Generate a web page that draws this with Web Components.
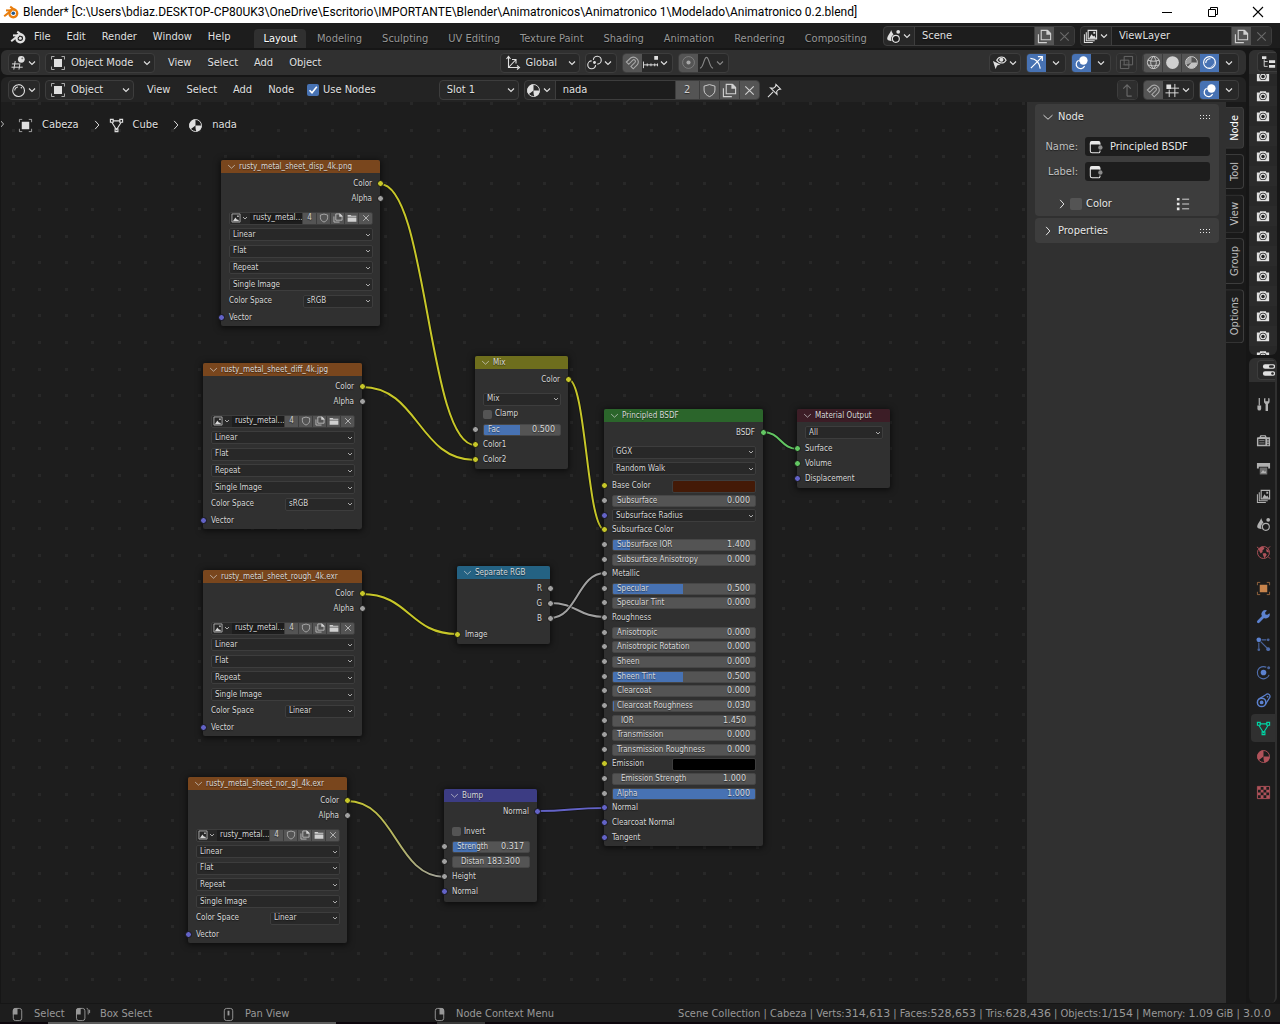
<!DOCTYPE html>
<html lang="en">
<head>
<meta charset="utf-8">
<title>Blender</title>
<style>
html, body { margin: 0; height: 100%; background: #161616; }
body { font: 11px/14px "DejaVu Sans Condensed", "DejaVu Sans", sans-serif; color: #e0e0e0; overflow: hidden; }
</style>
</head>
<body>
<blender-app></blender-app>
<script>
const S = (d, w = 1, extra = '') => `<path d="${d}" fill="none" stroke="currentColor" stroke-width="${w}" ${extra}/>`;
const F = (d, extra = '') => `<path d="${d}" fill="currentColor" ${extra}/>`;
const C = (x, y, r, extra = '') => `<circle cx="${x}" cy="${y}" r="${r}" fill="currentColor" ${extra}/>`;
const O = (x, y, r, w = 1, extra = '') => `<circle cx="${x}" cy="${y}" r="${r}" fill="none" stroke="currentColor" stroke-width="${w}" ${extra}/>`;
const MAGNET = S('M1.500 7.500L6 3.200A5.200 5.200 0 0 1 13.200 10.400L8.800 14.700L6.300 12.200L10.700 7.900A1.700 1.700 0 0 0 8.300 5.500L4 9.900z', 1.200);
const LOGO = S('M1.2 12.2L8.2 6.6', 2) + S('M3 6.4h6', 2) + S('M7.2 2.6l5 3.8', 2) + O(10.3, 9.3, 3.9, 2.4);
const ICONS = {
  logo: LOGO + C(10.3, 9.3, 1.5),
  logocolor: `<g color="#e87d0d">${LOGO}</g><circle cx="10.3" cy="9.3" r="1.8" fill="#265787"/>`,
  view3d: S('M1 9.5h8M.5 13h12M4.5 6.5l-1.5 9M9.5 9l-1 6.5') + C(11, 4.6, 3.6) + `<circle cx="12" cy="3.6" r="1" fill="#777"/>`,
  object: F('M4 4h8v8H4z') + S('M1.5 4.5v-3h3M11.5 1.5h3v3M14.5 11.5v3h-3M4.5 14.5h-3v-3', 1, 'opacity=".7"'),
  axes: S('M3.5 2v10.500h10M1.500 4l2-2.500 2 2.500M12 10.500l2.500 2-2.500 2M4 12l6.500-7M7 4.500h4v4', 1.1),
  pivot: C(8, 8, 1.5) + S('M6.800 5.200A4.200 4.200 0 1 1 11 9.700M9.200 10.800A4.200 4.200 0 1 1 5 6.300', 1.200),
  magnet: MAGNET,
  snapinc: S('M.5 7v7M4.500 9v3M8.500 9v3M12.500 9v3M15.500 9v3M.5 10.500h15', 1) + F('M12 1h4v4h-4z'),
  prop: O(8, 8, 6.300, 1, 'opacity=".5"') + C(8, 8, 2.200),
  falloff: S('M1 14c4 0 4-11.500 7-11.500S11 14 15 14', 1.200),
  visibility: S('M5 5.500c2.500-4.500 8-4.500 10 0-2 4-7.500 4-10 0z', 1.200) + C(10, 5, 2.200) + F('M1 6.500l8 3.500-3.500 1.300L3.800 15z'),
  gizmo: S('M2 14L14 2M9.500 1.800H14.200V6.500', 1.300) + S('M1.500 3.500c6 .5 9.500 4 10.500 11', 1.300),
  overlay: C(10, 5.800, 4.500) + S('M5 5.600a4.700 4.700 0 1 0 6.300 6.200', 1.300) + `<path d="M6 7.500a3.200 3.200 0 0 0 3.300 4.200" fill="none" stroke="#4772b3" stroke-width="1"/>`,
  xray: S('M5.500 1.500h9v9h-9z') + S('M1.500 5.500h9v9h-9z') + S('M4 10.500h3M8.500 8v3', 1, 'stroke-dasharray="1 1"'),
  wire: O(8, 8, 6.500) + S('M8 1.500c-4 4-4 9 0 13 4-4 4-9 0-13M2 5.500c4 1.500 8 1.500 12 0M2 10.500c4 1.500 8 1.500 12 0'),
  solid: C(8, 8, 6.800),
  matprev: O(8, 8, 6.300) + F('M8 8V2a6 6 0 0 0-5.500 8.500z', 'opacity=".6"') + F('M8 8h6a6 6 0 0 1-6 6 7 7 0 0 1-4-1.500z', 'opacity=".9"'),
  rendered: O(8, 8, 6.300, 1.200) + S('M4 8.500A4.500 4.500 0 0 1 9 4', 1.200) + F('M13.500 5A7 7 0 0 1 5 13.500 8 8 0 0 0 13.500 5z', 'opacity=".7"'),
  matsphere: S('M1.800 8.500A6.300 6.300 0 1 0 8 1.800 6.300 6.300 0 0 0 1.800 8.500z', 1.200) + S('M4 8A4 4 0 0 1 7.500 4.200', 1.100) + C(11, 5, .8),
  material: O(8, 8, 6.400) + F('M8 8V1.500A6.500 6.500 0 0 0 2.800 12z') + F('M8 8h6.500A6.500 6.500 0 0 1 9 14.500C8 12.500 8 10 8 8z'),
  shield: S('M8 1.700l5.800 1.600v4.200c0 3.300-2.500 5.700-5.800 7-3.300-1.300-5.800-3.700-5.800-7V3.300z'),
  copy: S('M4.500 1.500h6.500l3.500 3.500v6.500h-10z', 1.200) + F('M10 1h1.500l3.500 3.500V6h-5z') + S('M1.500 5.500v9h9', 1.200),
  folder: F('M1 3h5l1 1.500h8V6H1z') + F('M1 7h14v7H1z'),
  x: S('M3.500 3.500l9 9M12.500 3.500l-9 9', 1.200),
  image: S('M1.500 1.500h13v13h-13z', 1.100) + F('M3 13l4-6 3 4 1-1 2 3z') + F('M10 4h2.200v2.200H10z'),
  chevron: S('M4 6l4 4 4-4', 1.500),
  right: S('M5.500 2.500l5 5.500-5 5.500', 1.300),
  down: S('M2 5.500l6 5.500 6-5.500', 1.200),
  mesh: S('M3 4.500L8 12.500 13 4.500M4 3h8', 1.200) + S('M1.500 1.500h3v3h-3zM11.500 1.500h3v3h-3zM6.500 11.500h3v3h-3z', 1.200),
  pin: S('M9.500 1.500l5 5-2.200.3-2 2.200.4 3.200-7-7 3.200.4 2.300-2zM6.500 9.500L1 15', 1.100),
  up: S('M7.500 14V2M3.500 6l4-4 4 4M7.500 14h5', 1.200),
  gridsnap: S('M.5 10.500h14M6 5.500h9M4.500 7v8M10.500 1v14') + F('M1.500 1.500h5v5h-5z'),
  camera: F('M1 4h3.500V2.500h7V4H15v10H1z') + `<circle cx="8" cy="8.500" r="4.200" fill="#282828"/>` + C(8, 8.500, 3.300) + `<circle cx="8" cy="8.500" r="2" fill="#282828"/>`,
  outliner: F('M0 1.500h5v3H0z') + F('M8 6h7v3H8z') + F('M8 11.500h7v3H8z') + S('M2.500 5v8h4M2.500 7.500h4'),
  props: F('M3.500 1.500h9a2.500 2.500 0 0 1 0 5h-9a2.500 2.500 0 0 1 0-5zM3.500 9.500h9a2.500 2.500 0 0 1 0 5h-9a2.500 2.500 0 0 1 0-5z') + `<rect x="8" y="2.500" width="5.500" height="3" rx="1.500" fill="#282828"/><rect x="10.500" y="10.500" width="3" height="3" rx="1.500" fill="#282828"/>`,
  tool: S('M3.500 1v8', 1.300) + F('M1.500 9h4v3.500a2 2 0 0 1-4 0z') + S('M11.500 6v9', 2.600) + F('M8.500 1.500v3a3 3 0 0 0 6 0v-3l-1.500-.5v3.500h-3V1z'),
  render: F('M1 5.500a1 1 0 0 1 1-1h1.500L5 2h5l1.500 2.500H15V14H1z') + `<path d="M2.500 6.500h7.500v6H2.500zM12 6.500h1.500V8H12zM12 9h1.500v1.500H12zM12 11.500h1.500V13H12zM5.500 3h4v1h-4z" fill="#2a2a2a"/><path d="M3.500 8h5.500M3.500 10.500h5.500" stroke="#777"/>`,
  output: F('M1 2h14v6h-2V6H3v2H1z') + F('M4 7h8v7.500H4z', 'opacity=".55"') + F('M5 13l2.500-3.500L9 11.500l1-1 1 2.500z'),
  viewlayer: S('M5.500 1.500h9v9h-9z', 1.200) + F('M6.500 10l2.500-4.500L11 8l1-1 2 3z') + F('M11 3h2v2h-2z') + S('M3.500 3.500v9h9M1.500 5.500v9h9', 1.100),
  scene: F('M5.500 1c1 3.500 4.500 6.500 3.200 10.500-1 1.500-5.500 1.700-7 0C0 8.500 4.500 5 5.500 1z') + `<circle cx="10.500" cy="10.500" r="5" fill="#1d1d1d"/>` + O(10.500, 10.500, 3.700, 1.200) + C(13, 3, 2),
  world: O(8, 8, 6.400) + F('M3 4c2-2.500 5-2 5-2l1 2-2 1.500v2L5 9 3.500 6.500zM7 9l3-.5 1.500 2-2.500 3.500-1-2zM10.500 4.500L13 5l1 3-2.500-.5z') + S('M1 2l3 2.500M12.500 4L15 1.500M13 12.500l2 2'),
  wrench: S('M2.500 13.500L8.500 7.500', 3, 'stroke-linecap="round"') + F('M14.500 4.500a4.200 4.200 0 0 1-7 4.200A4.200 4.200 0 0 1 11.700 1.500L9.700 3.800l.4 2 2 .4z'),
  particles: C(3, 3, 2.500) + C(13, 3, 1.500, 'opacity=".7"') + C(3, 13.500, 1.400, 'opacity=".7"') + C(13, 13, 2, 'opacity=".8"') + S('M6 3h5M3 6v6M5 5l7 7', 1.200, 'opacity=".7"'),
  physics: C(8, 8, 3) + S('M11 2.500A6.500 6.500 0 1 0 14 10.500', 1.200, 'opacity=".8"') + C(13.500, 3, 1.600, 'opacity=".7"'),
  constraint: O(6, 10, 4.500, 1.600) + C(6, 10, 2) + S('M3 6.500L10.500 1.800a2.600 2.600 0 0 1 3.700 3.700L10 12.300', 1.300) + C(12.300, 4, .9),
  texture: S('M1.500 1.500h13v13h-13z') + F('M2 2h3v3H2zM8 2h3v3H8zM5 5h3v3H5zM11 5h3v3h-3zM2 8h3v3H2zM8 8h3v3H8zM5 11h3v3H5zM11 11h3v3h-3z'),
  mouse: S('M3.500 4a2.500 2.500 0 0 1 2.500-2.500h4a2.500 2.500 0 0 1 2.500 2.500v8a2.500 2.500 0 0 1-2.500 2.500h-4a2.500 2.500 0 0 1-2.500-2.500z', 1),
  node: S('M1.500 4v8.500a2 2 0 0 0 2 2h7M12.500 4v1', 1.200) + F('M1 5V3a2 2 0 0 1 2-2h8a2 2 0 0 1 2 2v2z') + S('M12.500 12v1a1.500 1.500 0 0 1-2 1.500', 1.200) + C(13, 8.500, 2.500, 'opacity=".55"'),
  list: F('M1 1h3v3H1zM1 6.500h3v3H1zM1 12h3v3H1z') + S('M7 2.500h8M7 8h8M7 13.500h8'),
  grip: F('M0 6h1v1H0zM3 6h1v1H3zM6 6h1v1H6zM9 6h1v1H9zM0 9h1v1H0zM3 9h1v1H3zM6 9h1v1H6zM9 9h1v1H9z', 'shape-rendering="crispEdges"'),
  minimize: S('M3 8.500h10'),
  restore: S('M3.500 5.500h7v7h-7zM5.500 5.500v-2h7v7h-2'),
  close: S('M3 3l10 10M13 3L3 13', 1.100)
};
ICONS.mouseL = ICONS.mouse + F('M3 8V4a3 3 0 0 1 3-3h2v7z');
ICONS.mouseR = ICONS.mouse + F('M13 8V4a3 3 0 0 0-3-3H8v7z');
ICONS.mouseM = ICONS.mouse + F('M7 4h2v5H7z');
ICONS.mouseDrag = `<g transform="translate(-3 0)">${ICONS.mouseL}</g>` + S('M11.500 1l1.500 2v5M14.500 3v3.500');

const SHARED = `
:host { display: block; box-sizing: border-box; }
:host([hidden]) { display: none; }
*, *::before { box-sizing: border-box; }
button, input, select { font: inherit; color: inherit; margin: 0; padding: 0; border: 0; border-radius: 0; background: none; min-width: 0; appearance: none; outline: none; text-shadow: inherit; }
button { cursor: default; }
`;
function define(name, css, render, after) {
  customElements.define(name, class extends HTMLElement {
    constructor() { super(); this.attachShadow({ mode: 'open' }); }
    connectedCallback() {
      const t = document.createElement('template');
      t.innerHTML = `<style>${SHARED}${css}</style>${render(k => this.getAttribute(k) ?? '', this)}`;
      this.shadowRoot.replaceChildren(t.content.cloneNode(true));
      if (after) after(this);
    }
  });
}

define('bl-icon', `
:host { display: block; flex: none; width: var(--icon, 16px); height: var(--icon, 16px); }
svg { display: block; width: 100%; height: 100%; overflow: visible; }`,
  a => `<svg viewBox="0 0 16 16" aria-hidden="true">${ICONS[a('name')] || ''}</svg>`);

/* Joined row of widgets with one rounded outline */
define('bl-group', `
:host { display: flex; flex: none; height: 20px; border: 1px solid #3d3d3d; border-radius: 4px; background: #282828; overflow: hidden; }
:host([compact]) { height: 13px; border-radius: 2px; --icon: 10px; }`,
  () => `<slot></slot>`);

define('bl-button', `
:host { display: flex; flex: none; width: 19px; }
button { display: flex; flex: 1; align-items: center; justify-content: center; --icon: 15px; }
:host([small]) button { --icon: 10px; }
:host([menu]) { width: 30px; }
:host([chev]) bl-icon { --icon: 12px; }
:host([menu]) bl-icon + bl-icon { --icon: 12px; }
:host([menu][small]) bl-icon + bl-icon { --icon: 8px; }
:host([tone=on]) button { background: #4772b3; color: #fff; }
:host([tone=raised]) button { background: #545454; border-left: 1px solid #3d3d3d; color: #d0d0d0; }
:host([tone=soft]) button { background: #545454; color: #a8a8a8; }
:host([tone=dim]) button { color: #6a6a6a; background: #2e2e2e; }
:host([tone=faint]) button { color: #888; }
button:hover { filter: brightness(1.15); }`,
  a => `<button type="button" aria-label="${a('label')}">${a('text') || `<bl-icon name="${a('icon')}"></bl-icon>`}${a('kind') === 'menu' ? '<bl-icon name="chevron"></bl-icon>' : ''}</button>`,
  el => { if (el.getAttribute('kind') === 'menu') el.toggleAttribute('menu', true); if (el.getAttribute('icon') === 'chevron') el.toggleAttribute('chev', true); });

define('bl-select', `
:host { display: flex; height: 20px; flex: none; border: 1px solid #3d3d3d; border-radius: 4px; background: #282828; width: var(--w); }
label { flex: 1; display: grid; align-items: center; min-width: 0; }
label > * { grid-area: 1 / 1; }
select { width: 100%; height: 100%; padding-left: 7px; }
:host([icon]) select { padding-left: 25px; }
.lead { margin-left: 4px; }
.chev { justify-self: end; --icon: 12px; margin-right: 1px; pointer-events: none; }
option { background: #181818; }
:host([compact]) { height: 13px; border-radius: 2px; flex: 1; }
:host([compact]) select { padding-left: 3px; }
:host([compact]) .chev { --icon: 8px; margin-right: 0; }`,
  a => `<label>${a('icon') ? `<bl-icon class="lead" name="${a('icon')}"></bl-icon>` : ''}<select aria-label="${a('label')}">${a('options').split('|').map(o => `<option>${o}</option>`).join('')}</select><bl-icon class="chev" name="chevron"></bl-icon></label>`);

define('bl-menu', `:host { flex: none; } button { padding: 0 8px; height: 20px; } button:hover { background: #3d3d3d; border-radius: 4px; }`,
  a => `<button type="button">${a('label')}</button>`);

define('bl-check', `
:host { flex: none; }
label { display: flex; align-items: center; gap: var(--gap, 4px); }
span { display: grid; width: var(--box, 12px); height: var(--box, 12px); }
span > * { grid-area: 1 / 1; }
input { width: 100%; height: 100%; border-radius: 2px; background: #545454; }
input:checked { background: #4772b3; }
input + svg { display: none; }
input:checked + svg { display: block; pointer-events: none; }`,
  a => `<label><span><input type="checkbox" ${a('state') === 'on' ? 'checked' : ''}><svg viewBox="0 0 12 12"><path d="M2.500 6.200L5 8.800 9.800 2.800" fill="none" stroke="#fff" stroke-width="1.600"/></svg></span>${a('label')}</label>`);

/* Label and value inside one box, with a blue part that shows the value */
define('bl-number', `
:host { flex: 1; min-width: 0; }
label { display: flex; align-items: center; height: 12px; border: 1px solid #464646; border-radius: 2px; padding: 0 5px 0 4px; white-space: nowrap;
  background: linear-gradient(90deg, #4772b3 var(--fill), #545454 var(--fill)); }
:host([plain]) label { padding: 0 9px 0 8px; }
span { flex: none; }
input { flex: 1; width: 20px; height: 10px; text-align: right; font-family: "DejaVu Sans", sans-serif; }`,
  a => `<label style="--fill:${a('fill') || 0}%"><span>${a('label')}</span><input value="${a('value')}"></label>`);

define('bl-socket', `
:host { position: absolute; top: 50%; width: 7px; height: 7px; margin-top: -4px; border-radius: 50%; border: 1px solid #141414; box-sizing: border-box; background: var(--c); }
:host([side=in]) { left: -3px; }
:host([side=out]) { right: -4px; }`, () => '');

const TINT = { y: '#c7c729', g: '#a1a1a1', v: '#6363c7', s: '#63c763' };
const sock = (c, side) => c ? `<bl-socket side="${side}" style="--c:${TINT[c]}"></bl-socket>` : '';
const out = (t, c) => `<div class="row end">${t}${sock(c, 'out')}</div>`;
const inp = (t, c) => `<div class="row">${t}${sock(c, 'in')}</div>`;
const sel = (t, c) => `<div class="row"><bl-select compact label="${t}" options="${t}"></bl-select>${sock(c, 'in')}</div>`;
const num = (t, v, fill = 0, plain = '') => `<div class="row"><bl-number label="${t}" value="${v}" fill="${fill}" ${plain}></bl-number>${sock('g', 'in')}</div>`;
const swatch = (t, color) => `<div class="row"><label for="${t.replace(' ', '')}">${t}</label><input id="${t.replace(' ', '')}" type="color" value="${color}">${sock('y', 'in')}</div>`;
const group = (mt, h, ...rows) => `<div class="rows" style="margin-top:${mt}px;height:${h}px">${rows.join('')}</div>`;
const imageBody = space =>
  group(4, 29, out('Color', 'y'), out('Alpha', 'g')) +
  group(4, 116,
    `<div class="row"><bl-group compact class="data">
      <bl-button small kind="menu" icon="image" label="Browse image"></bl-button>
      <input class="name" aria-label="Image name" value="rusty_metal...">
      <bl-button small tone="raised" text="4" label="Users"></bl-button>
      <bl-button small tone="raised" icon="shield" label="Fake user"></bl-button>
      <bl-button small tone="raised" icon="copy" label="New image"></bl-button>
      <bl-button small tone="raised" icon="folder" label="Open image"></bl-button>
      <bl-button small tone="raised" icon="x" label="Unlink"></bl-button></bl-group></div>`,
    sel('Linear'), sel('Flat'), sel('Repeat'), sel('Single Image'),
    `<div class="row"><span>Color Space</span><bl-select compact class="space" label="Color Space" options="${space}"></bl-select></div>`,
    inp('Vector', 'v'));

const NODES = [
  { x: 220, y: 58, w: 159, c: '#79461d', t: 'rusty_metal_sheet_disp_4k.png', b: imageBody('sRGB') },
  { x: 202, y: 261, w: 159, c: '#79461d', t: 'rusty_metal_sheet_diff_4k.jpg', b: imageBody('sRGB') },
  { x: 202, y: 468, w: 159, c: '#79461d', t: 'rusty_metal_sheet_rough_4k.exr', b: imageBody('Linear') },
  { x: 187, y: 675, w: 159, c: '#79461d', t: 'rusty_metal_sheet_nor_gl_4k.exr', b: imageBody('Linear') },
  { x: 474, y: 254, w: 93, c: '#6e6e1d', t: 'Mix', b:
    group(3, 15, out('Color', 'y')) + group(4, 16, sel('Mix')) +
    group(0, 14, `<div class="row"><bl-check label="Clamp"></bl-check></div>`) +
    group(2, 44, num('Fac', '0.500', 48), inp('Color1', 'y'), inp('Color2', 'y')) + group(0, 2) },
  { x: 456, y: 464, w: 93, c: '#246283', t: 'Separate RGB', b:
    group(3, 44, out('R', 'g'), out('G', 'g'), out('B', 'g')) + group(1, 15, inp('Image', 'y')) + group(0, 2) },
  { x: 443, y: 687, w: 93, c: '#3c3c83', t: 'Bump', b:
    group(2, 15, out('Normal', 'v')) + group(4, 17, `<div class="row"><bl-check label="Invert"></bl-check></div>`) +
    group(0, 59, num('Strength', '0.317', 32), num('Distan', '183.300', 0, 'plain'), inp('Height', 'g'), inp('Normal', 'v')) + group(0, 3) },
  { x: 603, y: 307, w: 159, c: '#2b652b', t: 'Principled BSDF', b:
    group(3, 15, out('BSDF', 's')) + group(4, 33, sel('GGX'), sel('Random Walk')) +
    group(2, 366,
      swatch('Base Color', '#441a07'), num('Subsurface', '0.000'), sel('Subsurface Radius', 'v'), inp('Subsurface Color', 'y'),
      num('Subsurface IOR', '1.400', 12), num('Subsurface Anisotropy', '0.000'), inp('Metallic', 'g'), num('Specular', '0.500', 49),
      num('Specular Tint', '0.000'), inp('Roughness', 'g'), num('Anisotropic', '0.000'), num('Anisotropic Rotation', '0.000'),
      num('Sheen', '0.000'), num('Sheen Tint', '0.500', 49), num('Clearcoat', '0.000'), num('Clearcoat Roughness', '0.030', 1),
      num('IOR', '1.450', 0, 'plain'), num('Transmission', '0.000'), num('Transmission Roughness', '0.000'), swatch('Emission', '#000000'),
      num('Emission Strength', '1.000', 0, 'plain'), num('Alpha', '1.000', 100), inp('Normal', 'v'), inp('Clearcoat Normal', 'v'), inp('Tangent', 'v')) + group(0, 1) },
  { x: 796, y: 307, w: 93, c: '#3c1d26', t: 'Material Output', b:
    group(2, 17, sel('All')) + group(1, 44, inp('Surface', 's'), inp('Volume', 's'), inp('Displacement', 'v')) + group(0, 2) }
];

define('bl-node', `
:host { font-size: 8px; line-height: 10px; color: #d8d8d8; background: #303030; border-radius: 2px; box-shadow: 0 1px 6px 1px rgba(0,0,0,.6); text-shadow: 0 1px 1px rgba(0,0,0,.5); }
header { display: flex; align-items: center; gap: 3px; height: 13px; padding-left: 6px; border-radius: 2px 2px 0 0; background: var(--head); --icon: 9px; white-space: nowrap; }
.rows { display: grid; grid-auto-rows: 1fr; }
.row { position: relative; display: flex; align-items: center; padding: 0 7px 0 8px; min-height: 0; white-space: nowrap; }
.end { justify-content: flex-end; padding-right: 8px; }
.row bl-check { --box: 9px; --gap: 3px; }
.data { flex: 1; }
.data bl-button { width: 14px; }
.data bl-button[kind=menu] { width: 20px; }
.name { flex: 1; width: 20px; padding-left: 3px; background: #1d1d1d; }
.space { margin-left: auto; flex: none; width: 70px; }
input[type=color] { margin-left: auto; width: 84px; height: 13px; border: 1px solid #3d3d3d; border-radius: 2px; }
input[type=color]::-webkit-color-swatch-wrapper { padding: 0; }
input[type=color]::-webkit-color-swatch { border: 0; border-radius: 1px; }`,
  a => { const n = NODES[+a('index')]; return `<header style="--head:${n.c}"><bl-icon name="down"></bl-icon>${n.t}</header>${n.b}`; });

const LINKS = [
  [379, 82, 474, 343, 'y'], [361, 285, 474, 358, 'y'], [567, 277, 604, 428, 'y'], [549, 501, 604, 515, 'g'], [549, 516, 604, 471, 'g'],
  [762, 330, 797, 347, 's'], [361, 492, 456, 532, 'y'], [346, 699, 444, 775, 'yg'], [536, 709, 604, 706, 'v']];

define('bl-canvas', `
:host { position: relative; flex: 1; min-width: 0; overflow: hidden; background: #1d1d1d; }
svg { position: absolute; inset: 0; width: 100%; height: 100%; }
bl-node { position: absolute; }
nav { position: absolute; left: 17px; top: 12px; height: 21px; display: flex; align-items: center; gap: 9px; --icon: 15px; text-shadow: 0 1px 1px #000; padding-top: 1px; }
nav a { display: flex; gap: 9px; align-items: center; color: inherit; text-decoration: none; }
nav a + bl-icon { --icon: 12px; margin: 0 -3px 0 3px; }
.toggle { position: absolute; left: -4px; top: 14px; width: 12px; height: 16px; display: flex; align-items: center; --icon: 10px; }`,
  () => {
    let dots = '';
    for (let i = 0; i < 40; i++) for (let j = 0; j < 35; j++) dots += `M${Math.round(10.6 + i * 26.58)} ${Math.round(j * 26.56)}h3v3h-3z`;
    const curves = LINKS.map(([x1, y1, x2, y2, c]) => {
      const m = (x1 + x2) / 2, d = `M${x1} ${y1}C${m} ${y1} ${m} ${y2} ${x2} ${y2}`;
      return `<path d="${d}" fill="none" stroke="#101010" stroke-width="3.600" opacity=".7"/><path d="${d}" fill="none" stroke="${c === 'yg' ? 'url(#fade)' : TINT[c]}" stroke-width="2"/>`;
    }).join('');
    return `<svg><defs><linearGradient id="fade"><stop offset="0" stop-color="#c7c729"/><stop offset="1" stop-color="#a1a1a1"/></linearGradient></defs>
      <path d="${dots}" fill="#282828" shape-rendering="crispEdges"/>${curves}</svg>
      <button class="toggle" type="button" aria-label="Show toolbar"><bl-icon name="right"></bl-icon></button>
      <nav><a href="#"><bl-icon name="object"></bl-icon>Cabeza</a><bl-icon name="right"></bl-icon>
      <a href="#"><bl-icon name="mesh"></bl-icon>Cube</a><bl-icon name="right"></bl-icon>
      <a href="#"><bl-icon name="material"></bl-icon>nada</a></nav>` +
      NODES.map((n, i) => `<bl-node index="${i}" style="left:${n.x}px;top:${n.y}px;width:${n.w}px"></bl-node>`).join('');
  });

define('bl-titlebar', `
:host { display: flex; align-items: center; flex: none; height: 23px; background: #fff; color: #000; font: 12px/16px Roboto, "Open Sans", sans-serif; padding-left: 3px; gap: 4px; }
h1 { flex: 1; font: inherit; margin: 0; white-space: nowrap; overflow: hidden; }
div { display: flex; }
button { width: 46px; height: 20px; display: flex; justify-content: center; align-items: center; }
button:last-child { width: 44px; }`,
  () => `<bl-icon name="logocolor"></bl-icon><h1>Blender* [C:\\Users\\bdiaz.DESKTOP-CP80UK3\\OneDrive\\Escritorio\\IMPORTANTE\\Blender\\Animatronicos\\Animatronico 1\\Modelado\\Animatronico 0.2.blend]</h1>
  <div><button aria-label="Minimize"><bl-icon name="minimize"></bl-icon></button><button aria-label="Restore"><bl-icon name="restore"></bl-icon></button><button aria-label="Close"><bl-icon name="close"></bl-icon></button></div>`);

define('bl-datablock', `
input { width: 120px; background: #1d1d1d; padding-left: 7px; border-left: 1px solid #3d3d3d; }
bl-group { display: flex; }
bl-button:not([kind]) { width: 20px; }`,
  a => `<bl-group><bl-button kind="menu" icon="${a('icon')}" label="Browse"></bl-button><input aria-label="${a('label')}" value="${a('label')}">${a('users') ? '<bl-button tone="raised" text="2" label="Users" style="width:24px"></bl-button><bl-button tone="raised" icon="shield" label="Fake user"></bl-button>' : ''}<bl-button tone="raised" icon="copy" label="New"></bl-button><bl-button tone="${a('users') ? 'raised' : 'dim'}" icon="x" label="Remove"></bl-button></bl-group>`);

define('bl-topbar', `
:host { display: flex; flex: none; height: 25px; background: #1d1d1d; padding: 0 8px 0 10px; text-shadow: 0 1px 1px rgba(0,0,0,.6); }
.menus { display: flex; align-items: center; padding-top: 2px; }
.tabs { display: flex; align-items: flex-end; margin-left: 16px; flex: 1; overflow: hidden; }
.tabs button { height: 19px; padding: 1px 9px 0; margin-right: 2px; color: #989898; white-space: nowrap; }
.tabs .on { background: #303030; color: #fff; border-radius: 4px 4px 0 0; }
.data { display: flex; gap: 5px; padding-top: 3px; }`,
  () => `<div class="menus"><bl-icon name="logo"></bl-icon>${['File', 'Edit', 'Render', 'Window', 'Help'].map(m => `<bl-menu label="${m}"></bl-menu>`).join('')}</div>
  <div class="tabs">${['Layout', 'Modeling', 'Sculpting', 'UV Editing', 'Texture Paint', 'Shading', 'Animation', 'Rendering', 'Compositing'].map((m, i) => `<button type="button" class="${i ? '' : 'on'}">${m}</button>`).join('')}</div>
  <div class="data"><bl-datablock icon="scene" label="Scene"></bl-datablock><bl-datablock icon="viewlayer" label="ViewLayer"></bl-datablock></div>`);

define('bl-header', `
:host { display: flex; flex: none; align-items: center; gap: 5px; height: 25px; padding: 0 7px; background: #303030; border-radius: 6px; text-shadow: 0 1px 1px rgba(0,0,0,.5); }
:host([flat]) { background: #232323; border-radius: 6px 6px 0 0; padding-top: 1px; }`,
  () => `<slot></slot>`);

define('bl-sidebar', `
:host { flex: none; width: 199px; background: #303030; padding: 2px 7px 2px 8px; color: #e8e8e8; text-shadow: 0 1px 1px rgba(0,0,0,.5); }
section { background: #3d3d3d; border-radius: 4px; margin-bottom: 2px; }
h2 { display: flex; align-items: center; gap: 4px; height: 25px; margin: 0; padding: 0 3px 0 7px; font: inherit; --icon: 12px; }
h2 .grip { margin-left: auto; --icon: 16px; }
.field { display: grid; grid-template-columns: 34px minmax(0, 1fr); gap: 7px; align-items: center; padding: 0 9px; margin-bottom: 6px; color: #c0c0c0; }
.first { padding-top: 8px; }
.field label { text-align: right; white-space: nowrap; }
.box { display: flex; align-items: center; gap: 7px; height: 19px; padding-left: 4px; border-radius: 3px; background: #1d1d1d; color: #e8e8e8; --icon: 14px; }
.box input { flex: 1; width: 20px; }
.color { display: flex; align-items: center; gap: 2px; padding: 10px 29px 5px 21px; --icon: 12px; }
.color bl-icon:last-child { margin-left: auto; --icon: 14px; }`,
  () => `<section><h2><bl-icon name="down"></bl-icon>Node<bl-icon class="grip" name="grip"></bl-icon></h2>
  <div class="field first"><label for="nm">Name:</label><div class="box"><bl-icon name="node"></bl-icon><input id="nm" value="Principled BSDF"></div></div>
  <div class="field"><label for="lb">Label:</label><div class="box"><bl-icon name="node"></bl-icon><input id="lb"></div></div>
  <div class="color"><bl-icon name="right"></bl-icon><bl-check label="Color"></bl-check><bl-icon name="list"></bl-icon></div></section>
  <section><h2><bl-icon name="right"></bl-icon>Properties<bl-icon class="grip" name="grip"></bl-icon></h2></section>`);

define('bl-tabs', `
:host { display: flex; flex-direction: column; flex: none; width: 20px; gap: 5px; padding: 5px 2px 0 0; background: #191919; }
button { writing-mode: vertical-rl; transform: rotate(180deg); width: 18px; padding: 7px 0; border: 1px solid #3d3d3d; border-right: 0; border-radius: 4px 0 0 4px; color: #c0c0c0; background: #1d1d1d; line-height: 16px; }
.on { background: #303030; color: #fff; }`,
  () => ['Node', 'Tool', 'View', 'Group', 'Options'].map((t, i) => `<button type="button" class="${i ? '' : 'on'}">${t}</button>`).join(''));

define('bl-rightcol', `
:host { display: flex; flex-direction: column; flex: none; width: 28px; gap: 3px; }
.out { height: 305px; flex: none; overflow: hidden; border-radius: 6px; background: #282828; }
.head { height: 24px; background: #303030; padding: 2px 0 0 8px; }
.head button { display: flex; align-items: center; width: 20px; height: 20px; padding-left: 4px; border: 1px solid #3d3d3d; border-right: 0; border-radius: 4px 0 0 4px; background: #282828; overflow: hidden; --icon: 14px; }
.cams { display: flex; flex-direction: column; margin-top: -8px; clip-path: inset(8px 0 0 0); --icon: 14px; }
.cams div { height: 20px; flex: none; padding: 3px 0 0 7px; }
.cams div:nth-child(even) { background: #2b2b2b; }
.props { flex: 1; border-radius: 6px; background: #1d1d1d; border-right: 2px solid #303030; overflow: hidden; }
ul { list-style: none; margin: 0; padding: 8px 0 0 2px; --icon: 15px; }
li { display: flex; justify-content: center; align-items: center; height: 28px; border-radius: 4px 0 0 4px; color: #b0b0b0; }
li button { display: flex; }
.gap { margin-bottom: 8px; }
.on { background: #303030; }`,
  () => `<div class="out"><div class="head"><button type="button" aria-label="Outliner"><bl-icon name="outliner"></bl-icon></button></div>
  <div class="cams">${'<div><bl-icon name="camera"></bl-icon></div>'.repeat(15)}</div></div>
  <div class="props"><div class="head"><button type="button" aria-label="Properties"><bl-icon name="props"></bl-icon></button></div>
  <ul>${[['tool', '', 'gap'], ['render'], ['output'], ['viewlayer'], ['scene'], ['world', '#b0525a', 'gap'], ['object', '#c8844c'], ['wrench', '#5c82d0'], ['particles', '#5c82d0'], ['physics', '#5c82d0'], ['constraint', '#5c82d0'], ['mesh', '#00d4a4', 'on'], ['material', '#b0525a', 'gap'], ['texture', '#b0525a']].map(([n, c = '', k = '']) => `<li class="${k}" style="${c ? 'color:' + c : ''}"><button type="button" aria-label="${n}"><bl-icon name="${n}"></bl-icon></button></li>`).join('')}</ul></div>`);

const STATS = 'Scene Collection | Cabeza | Verts:314,613 | Faces:528,653 | Tris:628,436 | Objects:1/154 | Memory: 1.09 GiB | 3.0.0';
define('bl-status', `
:host { flex: none; background: #1d1d1d; color: #989898; }
.line { display: grid; grid-template-columns: 66px 145px 211px 1fr auto; align-items: center; height: 18px; padding: 2px 9px 0 10px; }
.line > div { display: flex; align-items: center; gap: 9px; white-space: nowrap; --icon: 15px; }
.line p { margin: 0; white-space: nowrap; }
.line b { font-weight: normal; font-family: "DejaVu Sans", sans-serif; }
.strip { display: flex; height: 2px; background: #0c060c; padding-left: 48px; gap: 101px; }
.strip i { width: 288px; background: #5c5c5c; }
.strip i + i { width: 48px; background: #3a3a3a; }`,
  () => `<div class="line"><div><bl-icon name="mouseL"></bl-icon>Select</div><div><bl-icon name="mouseDrag"></bl-icon>Box Select</div><div><bl-icon name="mouseM"></bl-icon>Pan View</div><div><bl-icon name="mouseR"></bl-icon>Node Context Menu</div>
  <p>${STATS.replace(/\d[\d.,/]*/g, '<b>$&</b>')}</p></div><div class="strip"><i></i><i></i></div>`);

const menus = list => `<div class="menus">${list.map(m => `<bl-menu label="${m}"></bl-menu>`).join('')}</div>`;
define('blender-app', `
:host { display: flex; flex-direction: column; height: 100vh; background: #161616; }
main { flex: 1; min-height: 0; display: flex; gap: 3px; padding: 2px 3px 1px 1px; }
.left { flex: 1; min-width: 0; display: flex; flex-direction: column; gap: 2px; }
.editor { flex: 1; min-height: 0; display: flex; flex-direction: column; }
.body { flex: 1; min-height: 0; display: flex; }
.menus { display: flex; }
.push { margin-left: auto; }
.a { flex: 39; } .b { flex: 61; }
.slot { margin-left: 58px; }`,
  () => `<bl-titlebar></bl-titlebar><bl-topbar></bl-topbar>
  <main><div class="left">
  <bl-header>
    <bl-group><bl-button kind="menu" icon="view3d" label="Editor type"></bl-button></bl-group>
    <bl-select icon="object" label="Mode" options="Object Mode|Edit Mode" style="--w:110px"></bl-select>
    ${menus(['View', 'Select', 'Add', 'Object'])}
    <div class="a"></div>
    <bl-select icon="axes" label="Orientation" options="Global|Local" style="--w:80px"></bl-select>
    <bl-group><bl-button kind="menu" icon="pivot" label="Pivot"></bl-button></bl-group>
    <bl-group><bl-button tone="soft" icon="magnet" label="Snap"></bl-button><bl-button kind="menu" icon="snapinc" label="Snapping"></bl-button></bl-group>
    <bl-group><bl-button tone="soft" icon="prop" label="Proportional"></bl-button><bl-button kind="menu" tone="faint" icon="falloff" label="Falloff"></bl-button></bl-group>
    <div class="b"></div>
    <bl-group><bl-button kind="menu" icon="visibility" label="Visibility"></bl-button></bl-group>
    <bl-group><bl-button tone="on" icon="gizmo" label="Gizmos"></bl-button><bl-button icon="chevron" label="Gizmo options"></bl-button></bl-group>
    <bl-group><bl-button tone="on" icon="overlay" label="Overlays"></bl-button><bl-button icon="chevron" label="Overlay options"></bl-button></bl-group>
    <bl-group><bl-button tone="dim" icon="xray" label="X-ray"></bl-button></bl-group>
    <bl-group><bl-button tone="raised" icon="wire" label="Wireframe"></bl-button><bl-button tone="raised" icon="solid" label="Solid"></bl-button><bl-button tone="raised" icon="matprev" label="Material preview"></bl-button><bl-button tone="on" icon="rendered" label="Rendered"></bl-button><bl-button icon="chevron" label="Shading options"></bl-button></bl-group>
  </bl-header>
  <div class="editor">
  <bl-header flat>
    <bl-group><bl-button kind="menu" icon="matsphere" label="Editor type"></bl-button></bl-group>
    <bl-select icon="object" label="Shader type" options="Object|World" style="--w:89px"></bl-select>
    ${menus(['View', 'Select', 'Add', 'Node'])}
    <bl-check state="on" label="Use Nodes"></bl-check>
    <bl-select class="slot" label="Slot" options="Slot 1" style="--w:80px"></bl-select>
    <bl-datablock icon="material" label="nada" users="2"></bl-datablock>
    <bl-button icon="pin" label="Pin"></bl-button>
    <bl-group class="push"><bl-button tone="dim" icon="up" label="Parent node tree"></bl-button></bl-group>
    <bl-group><bl-button tone="soft" icon="magnet" label="Snap"></bl-button><bl-button kind="menu" icon="gridsnap" label="Snap element"></bl-button></bl-group>
    <bl-group><bl-button tone="on" icon="overlay" label="Overlays"></bl-button><bl-button icon="chevron" label="Overlay options"></bl-button></bl-group>
  </bl-header>
  <div class="body"><bl-canvas></bl-canvas><bl-sidebar></bl-sidebar><bl-tabs></bl-tabs></div>
  </div></div><bl-rightcol></bl-rightcol></main>
  <bl-status></bl-status>`);
</script>
</body>
</html>
